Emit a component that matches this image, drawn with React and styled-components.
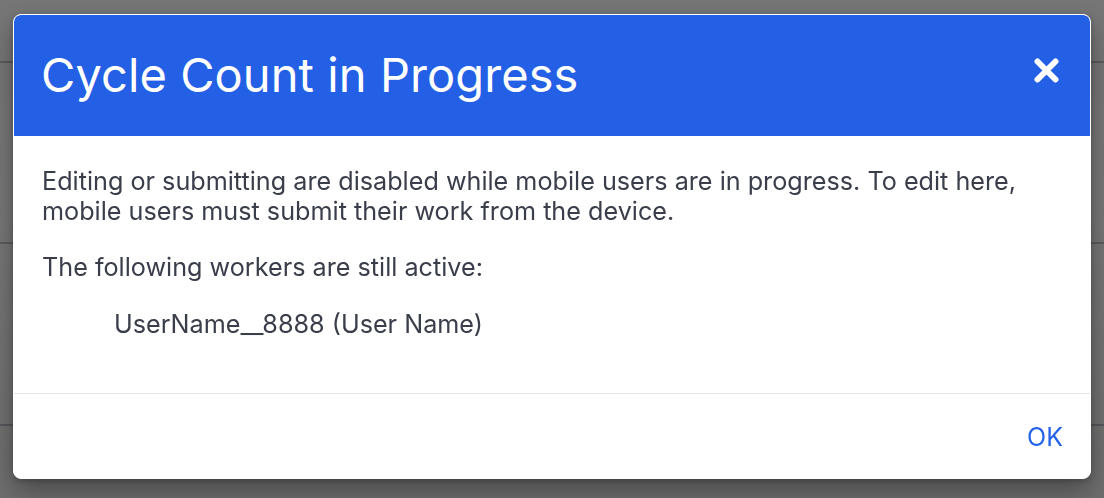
import * as React from 'react';
import styled, { createGlobalStyle } from 'styled-components';

const GlobalStyle = createGlobalStyle`
  html, body {
    margin: 0;
    padding: 0;
    height: 100%;
  }
  body {
    background: #7b7b7b;
    font-family: Inter, 'Noto Sans', sans-serif;
    overflow: hidden;
  }
`;

const PageBehind = styled.div`
  display: flex;
  flex-direction: column;
  height: 498px;
`;

const PageRow = styled.div`
  height: ${(p) => p.$height}px;
  border-bottom: 2px solid #5f5f64;
  flex-shrink: 0;
`;

const Overlay = styled.div`
  position: fixed;
  inset: 0;
  display: flex;
  align-items: flex-start;
  justify-content: center;
  padding-top: 14px;
  background: linear-gradient(
    to bottom,
    rgba(0, 0, 0, 0.04),
    rgba(0, 0, 0, 0.02) 40%,
    rgba(0, 0, 0, 0.1)
  );
`;

const Dialog = styled.div`
  width: 1078px;
  box-sizing: border-box;
  background: #fff;
  border: 1px solid #fff;
  border-radius: 8px;
  overflow: hidden;
  box-shadow: 0 12px 28px rgba(0, 0, 0, 0.35), 0 2px 6px rgba(0, 0, 0, 0.2);
`;

const Header = styled.div`
  display: flex;
  align-items: center;
  justify-content: space-between;
  height: 121px;
  padding: 0 28px;
  background: #2460e5;
  border-radius: 6px 6px 0 0;
`;

const Title = styled.h2`
  margin: 0 0 0 -1px;
  color: #fff;
  font-size: 47px;
  font-weight: 400;
  line-height: 1.2;
  letter-spacing: 0.08px;
`;

const CloseButton = styled.button`
  display: flex;
  align-items: center;
  justify-content: center;
  width: 25px;
  height: 25px;
  padding: 0;
  margin: 0 3px 10px 0;
  border: none;
  background: transparent;
  cursor: pointer;
`;

const Body = styled.div`
  padding: 30px 28px 54px;
  color: #3a3e4a;
  font-size: 25.2px;
  line-height: 30px;
  border-bottom: 1px solid #e4e4e4;
`;

const Paragraph = styled.p`
  margin: 0 0 ${(p) => p.$gap || 0}px;
`;

const WorkerList = styled.ul`
  margin: 0;
  padding: 0 0 0 72px;
  list-style: none;
`;

const Footer = styled.div`
  display: flex;
  justify-content: flex-end;
  padding: 28px 28px 26px;
`;

const OkButton = styled.button`
  padding: 0;
  margin-right: -1px;
  border: none;
  background: transparent;
  color: #2563eb;
  font-family: inherit;
  font-size: 25px;
  line-height: 30px;
  cursor: pointer;
`;

const CloseIcon = () => (
  <svg width="25" height="25" viewBox="0 0 25 25" aria-hidden="true">
    <path
      d="M3.5 3.5 L21.5 21.5 M21.5 3.5 L3.5 21.5"
      stroke="#fff"
      strokeWidth="6"
      strokeLinecap="round"
    />
  </svg>
);

const workers = ['UserName__8888 (User Name)'];

const App = () => (
  <>
    <GlobalStyle />
    <PageBehind>
      <PageRow $height={61} />
      <PageRow $height={179} />
      <PageRow $height={180} />
    </PageBehind>
    <Overlay>
      <Dialog role="dialog" aria-labelledby="cc-title">
        <Header>
          <Title id="cc-title">Cycle Count in Progress</Title>
          <CloseButton type="button" aria-label="close">
            <CloseIcon />
          </CloseButton>
        </Header>
        <Body>
          <Paragraph $gap={26}>
            Editing or submitting are disabled while mobile users are in
            progress. To edit here, mobile users must submit their work from
            the device.
          </Paragraph>
          <Paragraph $gap={27}>The following workers are still active:</Paragraph>
          <WorkerList>
            {workers.map((w) => (
              <li key={w}>{w}</li>
            ))}
          </WorkerList>
        </Body>
        <Footer>
          <OkButton type="button">OK</OkButton>
        </Footer>
      </Dialog>
    </Overlay>
  </>
);

export default App;
